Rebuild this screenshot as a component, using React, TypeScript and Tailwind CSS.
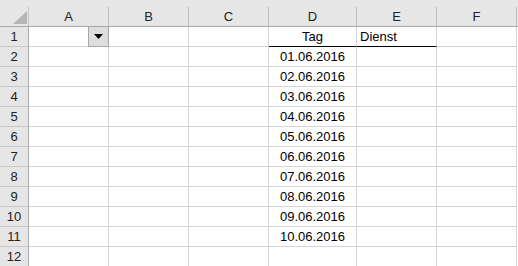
import React from 'react';

const cols = [
  { key: 'A', w: 'w-[80px]' },
  { key: 'B', w: 'w-[80px]' },
  { key: 'C', w: 'w-[80px]' },
  { key: 'D', w: 'w-[88px]' },
  { key: 'E', w: 'w-[80px]' },
  { key: 'F', w: 'w-[80px]' },
];

const dates = [
  '01.06.2016',
  '02.06.2016',
  '03.06.2016',
  '04.06.2016',
  '05.06.2016',
  '06.06.2016',
  '07.06.2016',
  '08.06.2016',
  '09.06.2016',
  '10.06.2016',
];

function cellContent(row: number, col: string) {
  if (row === 1 && col === 'D') return <span className="w-full text-center">Tag</span>;
  if (row === 1 && col === 'E') return <span className="pl-[3px]">Dienst</span>;
  if (col === 'D' && row >= 2 && row <= 11) {
    return <span className="w-full text-center">{dates[row - 2]}</span>;
  }
  return null;
}

function DropdownButton() {
  return (
    <div className="absolute right-[-1px] top-[-1px] w-[21px] h-[21px] bg-[#dedede] border border-[#a6a6a6] flex items-center justify-center">
      <svg width="9" height="5" viewBox="0 0 9 5">
        <polygon points="0,0 9,0 4.5,5" fill="#000" />
      </svg>
    </div>
  );
}

export default function App() {
  const rows = Array.from({ length: 12 }, (_, i) => i + 1);

  return (
    <div
      className="w-[518px] h-[266px] bg-white overflow-hidden text-[13px] text-black"
      style={{ fontFamily: '"Liberation Sans", Arial, sans-serif' }}
    >
      {/* column headers */}
      <div className="flex h-[27px] bg-[#e6e6e6] border-b border-[#a9a9a9]">
        <div className="w-[29px] pt-[7px] shrink-0">
          <div className="h-full border-r border-[#c4c4c4] relative">
            <svg className="absolute left-[13px] top-[4px]" width="14" height="13" viewBox="0 0 14 13">
              <polygon points="14,0 14,13 0,13" fill="#b5b5b5" />
            </svg>
          </div>
        </div>
        {cols.map((c) => (
          <div key={c.key} className={`${c.w} pt-[7px] shrink-0`}>
            <div className="h-full border-r border-[#bdbdbd] flex items-center justify-center text-[#222]">
              {c.key}
            </div>
          </div>
        ))}
      </div>

      {rows.map((r) => (
        <div key={r} className="flex h-[20px]">
          <div className="w-[29px] shrink-0 bg-[#e6e6e6] border-r border-b border-r-[#ababab] border-b-[#c8c8c8] flex items-end justify-center pb-[1px] leading-[16px] text-[#222]">
            {r}
          </div>
          {cols.map((c) => {
            const underline = r === 1 && (c.key === 'D' || c.key === 'E');
            return (
              <div
                key={c.key}
                className={`${c.w} shrink-0 border-r border-b border-r-[#d4d4d4] ${
                  underline ? 'border-b-black' : 'border-b-[#d4d4d4]'
                } relative flex items-end pb-[1px] leading-[16px] whitespace-nowrap`}
              >
                {cellContent(r, c.key)}
                {r === 1 && c.key === 'A' && <DropdownButton />}
              </div>
            );
          })}
        </div>
      ))}
    </div>
  );
}
